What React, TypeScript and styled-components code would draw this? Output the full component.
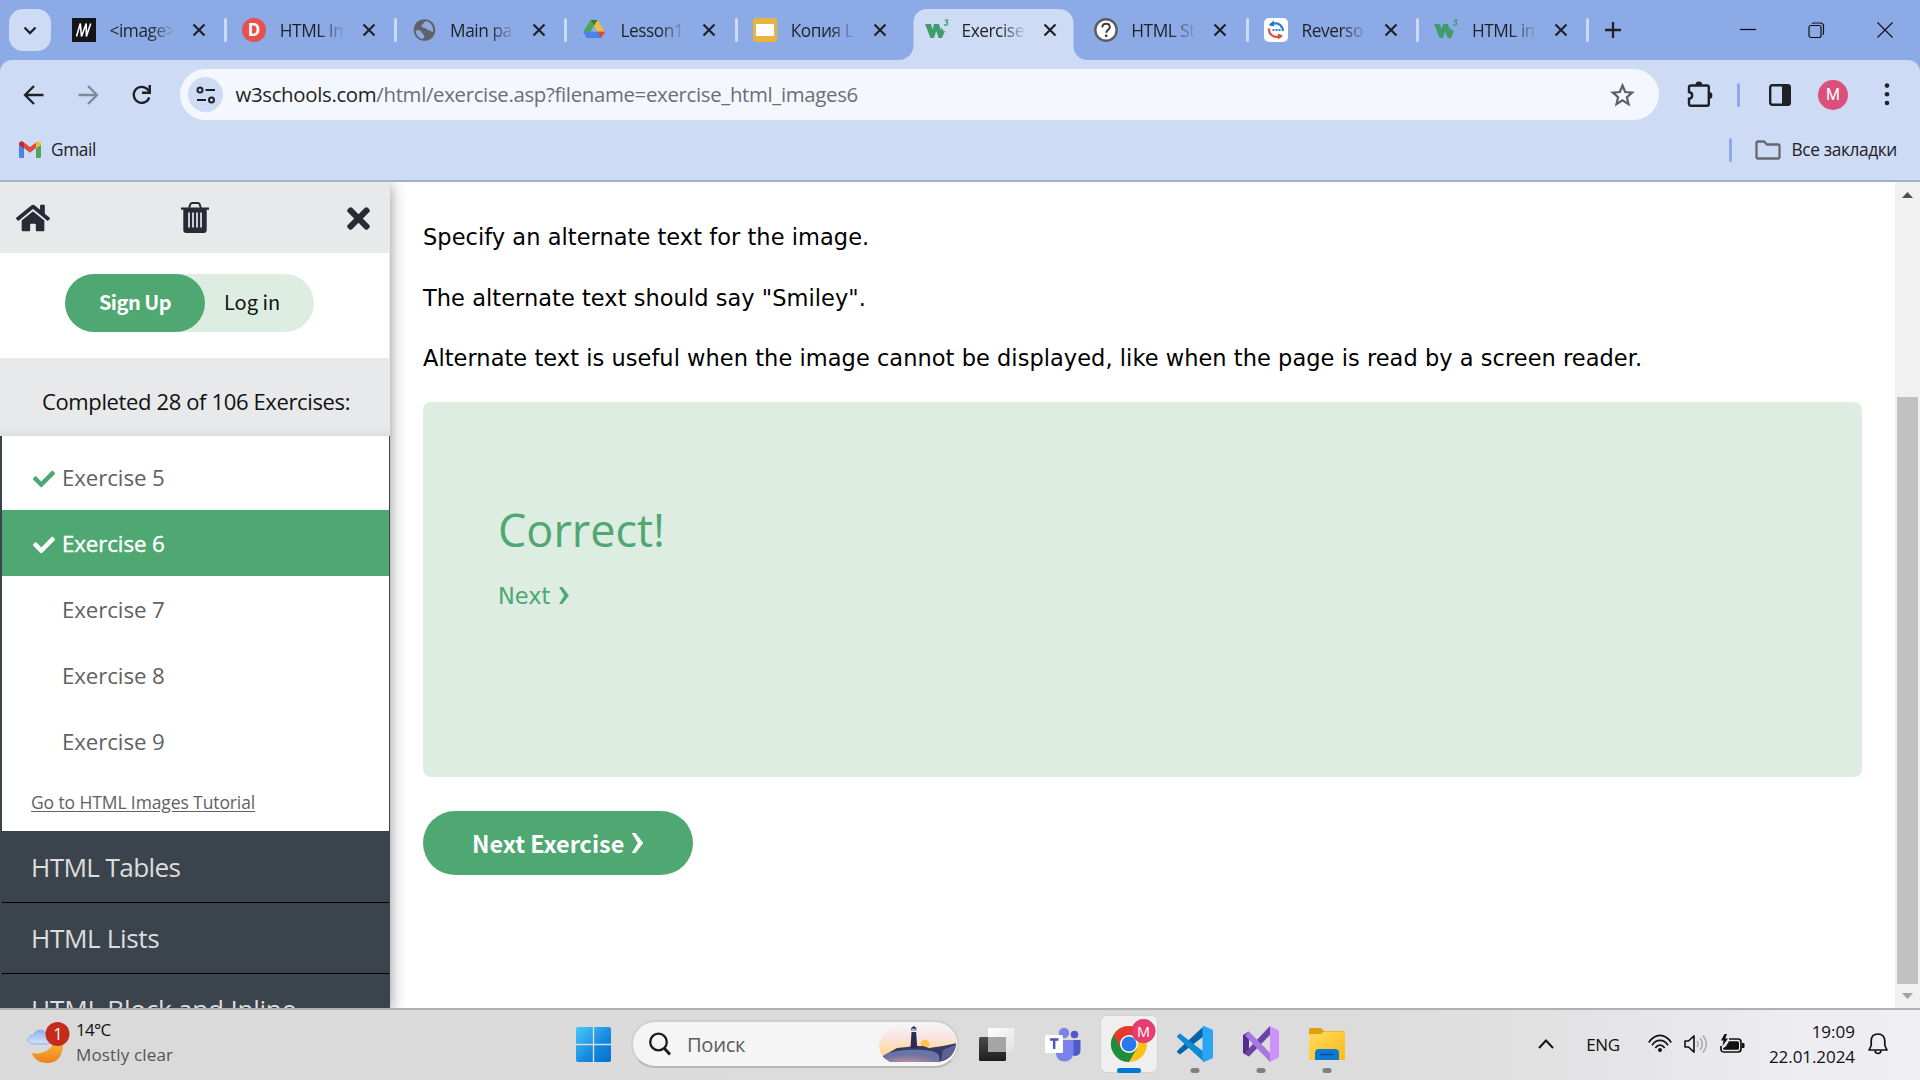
import React from "react";
import styled, { createGlobalStyle } from "styled-components";
import { FaCheck, FaHome, FaTimes } from "react-icons/fa";

const UI = `"Open Sans", "Noto Sans", sans-serif`;
const VERDANA = `Verdana, "DejaVu Sans", sans-serif`;
const SOURCE = `"Noto Sans CJK SC", sans-serif`;

const Global = createGlobalStyle`
  * { box-sizing: border-box; }
  body { margin: 0; background: #fff; overflow: hidden; }
  svg { display: block; flex: none; }
`;

const Screen = styled.div`
  width: 1920px;
  height: 1080px;
  display: flex;
  flex-direction: column;
  overflow: hidden;
  font-family: ${UI};
  color: #1f2125;
`;

/* Browser tabs */
const TabStrip = styled.div`
  height: 60px;
  flex: none;
  display: flex;
  align-items: center;
  background: #8cabe6;
`;
const TabSearch = styled.div`
  width: 42px;
  height: 42px;
  margin: 0 3px 0 9px;
  border-radius: 14px;
  background: #cedbf5;
  display: grid;
  place-items: center;
  flex: none;
`;
const TabItem = styled.div<{ $active?: boolean }>`
  position: relative;
  width: 170.3px;
  height: 60px;
  padding-left: ${(p) => (p.$active ? 20 : 18)}px;
  display: flex;
  align-items: center;
  flex: none;
`;
const ActiveShape = styled.svg`
  position: absolute;
  left: -7px;
  top: 9px;
`;
const TabIcon = styled.span`
  position: relative;
`;
const TabTitle = styled.div<{ $active?: boolean }>`
  position: relative;
  width: 63px;
  margin-left: ${(p) => (p.$active ? 12 : 13.5)}px;
  padding-top: 2px;
  overflow: hidden;
  white-space: nowrap;
  font-size: 17.3px;
  line-height: 24px;
  letter-spacing: -0.45px;
  mask-image: linear-gradient(90deg, #000 62%, transparent 104%);
`;
const TabClose = styled.svg`
  position: relative;
  margin-left: 19px;
`;
const TabDivider = styled.i`
  width: 3px;
  height: 24px;
  margin-left: auto;
  margin-right: -2.5px;
  border-radius: 2px;
  background: #cedbf5;
`;
const NewTab = styled.svg`
  margin-left: 18px;
`;
const WindowButtons = styled.div`
  margin-left: auto;
  margin-right: 27px;
  display: flex;
  align-items: center;
  gap: 52px;
`;

/* Toolbar */
const ChromeBody = styled.div`
  height: 122px;
  flex: none;
  background: #8cabe6;
`;
const ChromePanel = styled.div`
  height: 122px;
  border-radius: 12px 12px 0 0;
  background: #cedbf5;
  border-bottom: 2px solid #a4b0cb;
`;
const Toolbar = styled.div`
  height: 69px;
  display: flex;
  align-items: center;
`;
const NavIcons = styled.div`
  width: 180px;
  padding-left: 23px;
  display: flex;
  gap: 32px;
`;
const Omnibox = styled.div`
  width: 1479px;
  height: 51px;
  padding: 0 24px 0 8px;
  border-radius: 26px;
  background: #f4f8fe;
  display: flex;
  align-items: center;
`;
const SiteChip = styled.div`
  width: 35px;
  height: 35px;
  border-radius: 50%;
  background: #cedbf5;
  display: grid;
  place-items: center;
`;
const Url = styled.div`
  flex: 1;
  margin-left: 12.5px;
  padding-bottom: 2px;
  font-size: 20.4px;
  letter-spacing: -0.33px;
  line-height: 30px;
  color: #6b6e73;
  white-space: nowrap;
`;
const Host = styled.span`
  color: #1f2125;
`;
const ToolbarActions = styled.div`
  flex: 1;
  padding-left: 28px;
  display: flex;
  align-items: center;
`;
const BlueDivider = styled.i<{ $left: number; $right: number }>`
  width: 3px;
  height: 24px;
  margin: 0 ${(p) => p.$right}px 0 ${(p) => p.$left}px;
  border-radius: 2px;
  background: #8cabe6;
`;
const Avatar = styled.div`
  width: 30px;
  height: 30px;
  margin: 0 36px 0 27px;
  border-radius: 50%;
  background: #dc4f7a;
  color: #fff;
  display: grid;
  place-items: center;
  font: 400 16px Roboto, sans-serif;
`;
const Bookmarks = styled.div`
  height: 41px;
  padding: 0 23px 0 19px;
  display: flex;
  align-items: center;
  font-size: 17.3px;
  letter-spacing: -0.36px;
  line-height: 24px;
`;
const BookmarkText = styled.span`
  margin-left: 10px;
  white-space: nowrap;
`;
const BookmarksEnd = styled.div`
  margin-left: auto;
  display: flex;
  align-items: center;
`;

/* Page */
const Viewport = styled.div`
  height: 826px;
  flex: none;
  display: flex;
  background: #fff;
  overflow: hidden;
`;
const Sidebar = styled.aside`
  width: 390px;
  flex: none;
  display: flex;
  flex-direction: column;
  background: #3b444c;
  box-shadow: 0 3px 15px rgba(0, 0, 0, 0.45);
`;
const SideIcons = styled.div`
  height: 71px;
  flex: none;
  padding: 0 15px 0 16px;
  display: flex;
  align-items: center;
  justify-content: space-between;
  background: #e7e9eb;
  color: #282a35;
`;
const TrashSlot = styled.span`
  margin-right: 3px;
`;
const CloseSlot = styled.span`
  padding-top: 2px;
  stroke: #282a35;
  stroke-width: 18px;
`;
const AccountRow = styled.div`
  height: 105px;
  flex: none;
  padding: 21px 0 0 65px;
  background: #fff;
  border-right: 1px solid #e2e4e6;
`;
const AccountPill = styled.div`
  width: 249px;
  height: 58px;
  display: flex;
  border-radius: 29px;
  background: #ddede1;
  font-family: ${SOURCE};
  font-size: 20px;
  line-height: 56px;
  color: #111;
`;
const SignUp = styled.div`
  width: 140px;
  height: 58px;
  margin-right: 19px;
  border-radius: 29px;
  background: #4fa772;
  color: #fff;
  font-weight: 600;
  letter-spacing: -0.5px;
  text-align: center;
`;
const Progress = styled.div`
  height: 78px;
  flex: none;
  padding: 7px 0 0 42px;
  display: flex;
  align-items: center;
  background: linear-gradient(#e7e9eb 90%, #dcdee0);
  font-size: 22px;
  letter-spacing: -0.37px;
  color: #111;
  white-space: nowrap;
`;
const ExerciseList = styled.div`
  height: 395px;
  flex: none;
  margin: 0 1px 0 2px;
  padding-top: 8px;
  background: #fff;
`;
const ExerciseRow = styled.div<{ $current?: boolean }>`
  height: 66px;
  padding: 1px 0 0 31px;
  display: flex;
  align-items: center;
  font-size: 22.3px;
  letter-spacing: -0.1px;
  color: ${(p) => (p.$current ? "#fff" : "#616161")};
  background: ${(p) => (p.$current ? "#4fa772" : "transparent")};
  ${(p) => p.$current && `-webkit-text-stroke: 0.4px #fff;`}
`;
const Mark = styled.span<{ $current?: boolean }>`
  width: 29px;
  padding-top: 2px;
  font-size: 22px;
  color: ${(p) => (p.$current ? "#fff" : "#4fa772")};
  stroke: currentColor;
  stroke-width: 20px;
`;
const TutorialLink = styled.a`
  display: block;
  padding-left: 29px;
  line-height: 57px;
  font-size: 17.5px;
  letter-spacing: -0.11px;
  color: #616161;
  text-decoration: underline;
  text-underline-offset: 2px;
`;
const Section = styled.div<{ $h: number; $track: number }>`
  height: ${(p) => p.$h}px;
  flex: none;
  margin: 0 1px 0 2px;
  padding-left: 29px;
  display: flex;
  align-items: center;
  border-bottom: 1px solid #000;
  font-size: 26.2px;
  letter-spacing: ${(p) => p.$track}px;
  color: #ddd;
  white-space: nowrap;
`;
const Main = styled.main`
  flex: 1;
  padding: 38px 33px 0 33px;
`;
const Paragraph = styled.p`
  margin: 0 0 26.5px;
  font-family: ${VERDANA};
  font-size: 22.5px;
  line-height: 34px;
  letter-spacing: 0.04px;
  color: #000;
  white-space: nowrap;
`;
const Result = styled.section`
  height: 375px;
  padding: 95px 75px 0;
  border-radius: 8px;
  background: #ddede1;
  color: #4fa772;
`;
const ResultTitle = styled.h2`
  margin: 0 0 16px;
  font-weight: 400;
  font-size: 45px;
  line-height: 66px;
`;
const ResultNext = styled.div`
  display: flex;
  align-items: center;
  gap: 9px;
  font-family: ${VERDANA};
  font-size: 22.5px;
  line-height: 34px;
`;
const NextButton = styled.div`
  width: 270px;
  height: 64px;
  margin-top: 34px;
  padding-left: 49px;
  display: flex;
  align-items: center;
  gap: 7px;
  border-radius: 32px;
  background: #4fa772;
  color: #fff;
  font-family: ${SOURCE};
  font-weight: 600;
  font-size: 23.4px;
  line-height: 34px;
`;
const ScrollTrack = styled.div`
  width: 25px;
  flex: none;
  padding: 10px 2px 9px;
  display: flex;
  flex-direction: column;
  align-items: center;
  background: #f1f1f1;
`;
const ScrollThumb = styled.div`
  width: 21px;
  height: 587px;
  margin: auto 0 9px;
  background: #c1c1c1;
`;

/* Taskbar */
const Taskbar = styled.div`
  height: 72px;
  flex: none;
  padding-bottom: 2px;
  display: flex;
  align-items: center;
  border-top: 2px solid #b0b0b0;
  background: linear-gradient(90deg, #dadada 0, #dcdcdc 70%, #e1e1e2 80%, #ececf1 93%, #eeeef3 100%);
`;
const Weather = styled.div`
  position: relative;
  width: 576px;
  padding: 0 0 3px 27px;
  display: flex;
  align-items: center;
  gap: 6px;
`;
const Stack = styled.div<{ $end?: boolean }>`
  padding-bottom: 1px;
  font-size: 17px;
  line-height: 25px;
  text-align: ${(p) => (p.$end ? "right" : "left")};
  white-space: nowrap;
`;
const Line = styled.div<{ $muted?: boolean; $track?: number }>`
  letter-spacing: ${(p) => p.$track ?? 0}px;
  color: ${(p) => (p.$muted ? "#555" : "#111")};
`;
const SearchBox = styled.div`
  width: 328px;
  height: 48px;
  margin: -1px 5px 0 20px;
  padding-left: 16px;
  display: flex;
  align-items: center;
  border: 2px solid #cfcfcf;
  border-bottom-color: #b8b8b8;
  border-radius: 24px;
  background: #f5f5f5;
  font-size: 20.2px;
  letter-spacing: -0.35px;
  color: #5c5c5c;
`;
const SearchText = styled.span`
  flex: 1;
  margin-left: 16px;
`;
const Slot = styled.div<{ $active?: boolean }>`
  position: relative;
  width: 58px;
  height: 58px;
  margin: 0 4px;
  padding-bottom: 1px;
  display: grid;
  place-items: center;
  border-radius: 7px;
  border: 1px solid ${(p) => (p.$active ? "#d2d2d2" : "transparent")};
  background: ${(p) => (p.$active ? "#efefef" : "transparent")};
`;
const Indicator = styled.i<{ $active?: boolean }>`
  position: absolute;
  bottom: -1px;
  left: 50%;
  width: ${(p) => (p.$active ? 24 : 9)}px;
  height: 5px;
  transform: translateX(-50%);
  border-radius: 3px;
  background: ${(p) => (p.$active ? "#0078d4" : "#808080")};
`;
const Tray = styled.div`
  margin-left: auto;
  padding-right: 32px;
  display: flex;
  align-items: center;
`;
const Lang = styled.span`
  margin: 0 28px 0 32px;
  font-size: 17px;
  letter-spacing: -0.3px;
  color: #111;
`;
const TrayIcons = styled.div`
  margin-right: 24px;
  display: flex;
  align-items: center;
  gap: 12px;
`;
const BellWrap = styled.div`
  margin-left: 13px;
`;

const W3Icon = () => (
  <svg width="24" height="24" viewBox="0 0 24 24">
    <path d="M0 6h6l1.600 5.500L9 6h5l1.800 6 1-2.500 1.600 3.500H20L17 20h-3.500L11.300 13 9 20H5.500z" fill="#3f9c6b" />
    <path d="M19.500 2h3.300l-1.500 2.100c2 .3 1.800 3.200-.4 3.200-.9 0-1.500-.4-1.700-1.100" fill="none" stroke="#3f9c6b" strokeWidth="1.200" />
  </svg>
);
const favicons: Record<string, React.ReactNode> = {
  m: (
    <svg width="24" height="24" viewBox="0 0 24 24">
      <path d="M0 0h24v24H0z" fill="#15141a" />
      <path d="M4.500 18.500 8.300 5.500 9.500 18.500 14.200 5.500 14.400 18.500 18.700 5.500" fill="none" stroke="#fff" strokeWidth="1.600" />
    </svg>
  ),
  d: (
    <svg width="24" height="24" viewBox="0 0 24 24">
      <circle cx="12" cy="12" r="12" fill="#e8504a" />
      <text x="12" y="18" fill="#fff" fontFamily="Open Sans, sans-serif" fontWeight="700" fontSize="17" textAnchor="middle">D</text>
    </svg>
  ),
  globe: (
    <svg width="24" height="24" viewBox="0 0 24 24">
      <circle cx="11.500" cy="12" r="10.800" fill="#5f6368" />
      <path d="M2.800 12.500c3.800-1 6 .4 6.200 2.400.1 1.500 2.600 1 2.200 3.400l-1 2.800C6 20.500 2.800 17 2.800 12.500zM13.500 3c-1.500 1-3 1-3 2.500s-2.600.6-2 2.500 4 1.500 5 3 3.500 1 4.500 2 1 1.300 2 .3C20.500 8.500 18 4.500 13.500 3z" fill="#8cabe6" />
    </svg>
  ),
  drive: (
    <svg width="24" height="24" viewBox="0 0 24 24">
      <path d="M7.500 2h7L7.300 13.800 4 20 .3 13.800z" fill="#4ba55a" />
      <path d="M7.500 2h7l7.500 12h-7.300z" fill="#f4bb41" />
      <path d="M7.500 2h7L11 7.800z" fill="#327e3c" />
      <path d="M.3 13.800h21.700L18 20H4z" fill="#4a83ee" />
      <path d="M14.700 13.800H22L18 20z" fill="#d9493a" />
    </svg>
  ),
  slides: (
    <svg width="24" height="24" viewBox="0 0 24 24">
      <rect width="24" height="24" rx="3" fill="#e9b43d" />
      <path d="M3 6h18v12H3z" fill="#fff" />
    </svg>
  ),
  w3: <W3Icon />,
  help: (
    <svg width="24" height="24" viewBox="0 0 24 24">
      <circle cx="12" cy="12" r="10.700" fill="#fff" stroke="#5d5d5d" strokeWidth="2.400" />
      <path d="M8.300 9.500C8.300 7 9.800 5.800 12 5.800s3.800 1.300 3.800 3.400c0 2.500-3.500 2.700-3.500 5.600" fill="none" stroke="#3c3c3c" strokeWidth="2" />
      <circle cx="12.200" cy="17.800" r="1.400" fill="#3c3c3c" />
    </svg>
  ),
  reverso: (
    <svg width="24" height="24" viewBox="0 0 24 24">
      <rect width="24" height="24" rx="5" fill="#fff" />
      <path d="M6 7.500c4-3.800 10-2.500 12.300 2.500.5 1.300.6 2 .6 3" fill="none" stroke="#2f7fd6" strokeWidth="2.200" />
      <path d="M10 2.500 5 6.500l5 2z" fill="#2f6fc6" />
      <path d="M5 10.500c-.5 5 3 8.500 8 8.300 1.800 0 3.300-.6 4.500-1.500" fill="none" stroke="#d9523f" strokeWidth="2.200" />
      <path d="M14 21.500 19 18l-5-2.500z" fill="#d9523f" />
      <path d="M8.500 12h2m1 0h2m1 0h2" stroke="#2f7fd6" strokeWidth="2" />
    </svg>
  ),
};

const tabs = [
  { icon: "m", title: "<image>", divider: true },
  { icon: "d", title: "HTML Images", divider: true },
  { icon: "globe", title: "Main page", divider: true },
  { icon: "drive", title: "Lesson10", divider: true },
  { icon: "slides", title: "Копия Lesson" },
  { icon: "w3", title: "Exercise v", active: true },
  { icon: "help", title: "HTML Style", divider: true },
  { icon: "reverso", title: "Reverso", divider: true },
  { icon: "w3", title: "HTML images", divider: true },
];

const Tab = ({ icon, title, active, divider }: { icon: string; title: string; active?: boolean; divider?: boolean }) => (
  <TabItem $active={active}>
    {active && (
      <ActiveShape width="190" height="51" viewBox="0 0 190 51">
        <path d="M0 51c10 0 15.500-7 15.500-15V14C15.500 5 21.500 0 29.500 0h130c10 0 16 6 16 14v22c0 9 6 15 14.500 15z" fill="#cedbf5" />
      </ActiveShape>
    )}
    <TabIcon>{favicons[icon]}</TabIcon>
    <TabTitle $active={active}>{title}</TabTitle>
    <TabClose width="14" height="14" viewBox="0 0 14 14">
      <path d="M1.500 1.500l11 11M12.500 1.500l-11 11" stroke="#1f2125" strokeWidth="2.200" />
    </TabClose>
    {divider && <TabDivider />}
  </TabItem>
);

const BackArrow = ({ color, flip }: { color: string; flip?: boolean }) => (
  <svg width="22" height="22" viewBox="0 0 22 22">
    <path d={flip ? "M1.500 11h17M11 2l9 9-9 9" : "M20.500 11h-17M11 2l-9 9 9 9"} fill="none" stroke={color} strokeWidth="2.300" />
  </svg>
);

const Gmail = () => (
  <svg width="22" height="17" viewBox="0 0 22 17">
    <path d="M0 3l5 3.800V17H1.500A1.500 1.500 0 0 1 0 15.500z" fill="#4a83ee" />
    <path d="M22 3l-5 3.800V17h3.500a1.500 1.500 0 0 0 1.500-1.500z" fill="#4ba55a" />
    <path d="M5 1.500l6 4.600 6-4.600v5.600l-6 4.600-6-4.600z" fill="#dc4b3e" />
    <path d="M17 1.500C19-.5 22 .3 22 2.800V4l-5 3.500z" fill="#f4bb41" />
    <path d="M5 1.500C3-.5 0 .3 0 2.800V4l5 3.500z" fill="#b53128" />
  </svg>
);

const Trash = () => (
  <svg width="28" height="31" viewBox="0 0 28 31">
    <path d="M8 6l1.500-4Q10 1 11 1h6q1 0 1.500 1L20 6" fill="none" stroke="#282a35" strokeWidth="2" />
    <path d="M0 5.500h28v2.200h-2.300V28q0 3-3 3H5.300q-3 0-3-3V7.700H0z" fill="#282a35" />
    <path d="M8 10.500v15M12 10.500v15M16 10.500v15M20 10.500v15" stroke="#e7e9eb" strokeWidth="1.700" />
  </svg>
);

const Chevron = ({ w, h, color }: { w: number; h: number; color: string }) => (
  <svg width={w} height={h} viewBox="0 0 11 19">
    <path d="M0 0h3.600L11 9.500 3.600 19H0l5.800-9.500z" fill={color} />
  </svg>
);

const WeatherIcon = () => (
  <svg width="43" height="42" viewBox="0 0 43 42">
    <defs>
      <linearGradient id="moon" x1="0" y1="0" x2="0" y2="1">
        <stop offset="0" stopColor="#f6b93a" />
        <stop offset="1" stopColor="#ef7f1a" />
      </linearGradient>
      <linearGradient id="cloud" x1="0" y1="0" x2="0" y2="1">
        <stop offset="0" stopColor="#8eb2f0" />
        <stop offset="1" stopColor="#d3e2f8" />
      </linearGradient>
    </defs>
    <path d="M5 31c10 2 20-3 21-11l9.500 0c1.500 9-2 21-15 21-8 0-14-4-15.500-10z" fill="url(#moon)" />
    <path d="M6 22c-7 0-7-9 1-9 1-6 11-7 13 0 7 0 7 9 0 9z" fill="url(#cloud)" stroke="#7fa4ea" strokeWidth=".8" />
    <circle cx="30.500" cy="12" r="12" fill="#c42b1c" />
    <text x="31" y="18" fill="#fff" fontFamily="Open Sans, sans-serif" fontSize="16.500" textAnchor="middle">1</text>
  </svg>
);

const WindowsLogo = () => (
  <svg width="35" height="35" viewBox="0 0 35 35">
    <defs>
      <linearGradient id="win" x1="0" y1="0" x2="1" y2="1">
        <stop offset="0" stopColor="#4cc9fb" />
        <stop offset=".6" stopColor="#1488df" />
        <stop offset="1" stopColor="#0470cf" />
      </linearGradient>
    </defs>
    <path d="M2 0h14.800v16.800H0V2q0-2 2-2zM18.200 0H33q2 0 2 2v14.800H18.200zM0 18.200h16.800V35H2q-2 0-2-2zM18.200 18.200H35V33q0 2-2 2H18.200z" fill="url(#win)" />
  </svg>
);

const Lighthouse = () => (
  <svg width="78" height="38" viewBox="0 0 78 38">
    <defs>
      <linearGradient id="sky" x1="0" y1="0" x2="0" y2="1">
        <stop offset="0" stopColor="#f5f5f5" />
        <stop offset=".3" stopColor="#f9e4e3" />
        <stop offset=".7" stopColor="#fddba0" />
      </linearGradient>
      <radialGradient id="sea" cx=".45" cy="1" r=".6">
        <stop offset="0" stopColor="#c98f95" />
        <stop offset="1" stopColor="#6a75a5" />
      </radialGradient>
      <clipPath id="scene">
        <path d="M0 20C2 8 12 0 30 0h28c12 0 19 8 19 17 0 11-8 20-20 20H12C5 34 0 29 0 20z" />
      </clipPath>
    </defs>
    <g clipPath="url(#scene)">
      <path d="M0 0h78v38H0z" fill="url(#sky)" />
      <circle cx="46" cy="19" r="4.300" fill="#fdc24e" />
      <path d="M4 31l14-8 10-1 6-1h10l6 2 14-2 14-3v20H4z" fill="#353b66" />
      <path d="M5 30c10-5 25-6 40-5 14 1 17 5 15 13H6z" fill="url(#sea)" />
      <path d="M64 25l14-6v9L62 36z" fill="#5a6296" />
      <path d="M32.500 7h4.600l1.200 16h-6.800z" fill="#2a2c54" />
      <path d="M32.300 5.500h5v-2.500l-2.500-2-2.500 2z" fill="#352b50" />
      <path d="M33 4.500h3.600" stroke="#9fe0d8" strokeWidth="1.500" />
    </g>
  </svg>
);

const TaskView = () => (
  <svg width="36" height="36" viewBox="0 0 36 36">
    <defs>
      <linearGradient id="tv1" x1="0" y1="0" x2="0" y2="1">
        <stop offset="0" stopColor="#4b4b4b" />
        <stop offset="1" stopColor="#1d1d1d" />
      </linearGradient>
      <linearGradient id="tv2" x1="0" y1="0" x2="1" y2="1">
        <stop offset="0" stopColor="#fff" />
        <stop offset="1" stopColor="#e0e0e0" />
      </linearGradient>
    </defs>
    <rect x="0" y="11" width="27" height="24" rx="1.500" fill="url(#tv1)" />
    <rect x="9" y="2" width="26.500" height="24" rx="1" fill="url(#tv2)" />
    <path d="M9 11h18v15H9z" fill="#a5a5a5" />
  </svg>
);

const Teams = () => (
  <svg width="36" height="36" viewBox="0 0 36 36">
    <circle cx="29.500" cy="8.500" r="3.800" fill="#5059c9" />
    <path d="M26 14h9.500v10c0 7-7 7-9.500 4z" fill="#5059c9" />
    <circle cx="19" cy="7" r="5.200" fill="#7b83eb" />
    <path d="M11 14h17.500v12c0 6-4 9.500-9 9.500S11 32 11 27z" fill="#7b83eb" />
    <rect x="0" y="9" width="18" height="18" rx="1.500" fill="#fff" />
    <path d="M5 13.500h8.500M9.200 13.500V23" stroke="#4b53bc" strokeWidth="2.400" />
  </svg>
);

const ChromeLogo = () => (
  <svg width="54" height="50" viewBox="-8 0 54 50">
    <circle cx="19" cy="25" r="18" fill="#fbc116" />
    <path d="M19 25 3.400 16A18 18 0 0 0 19 43l7.800-13.500z" fill="#1e8e3e" />
    <path d="M19 16h15.600A18 18 0 0 0 3.400 16l7.800 13.500z" fill="#e33b2e" />
    <circle cx="19" cy="25" r="9" fill="#fff" />
    <circle cx="19" cy="25" r="7.500" fill="#2a78ec" />
    <circle cx="33.500" cy="12" r="11.700" fill="#e93d72" stroke="#b8345d" strokeWidth=".6" />
    <text x="33.500" y="17.500" fill="#fff" fontFamily="Open Sans, sans-serif" fontSize="14.500" textAnchor="middle">M</text>
  </svg>
);

const VSCode = () => (
  <svg width="36" height="36" viewBox="0 0 36 36">
    <path d="M27 0 1 24q-2 2 0 3l2 1.500L27 10z" fill="#0065a9" />
    <path d="M27 36 1 12q-2-2 0-3l2-1.500L27 26z" fill="#1289d3" />
    <path d="M27 0l8 3.500q1 .5 1 1.500v26q0 1-1 1.500L27 36q-1.500 0-1.500-3V3Q25.500 0 27 0z" fill="#2aa5f3" />
  </svg>
);

const VisualStudio = () => (
  <svg width="36" height="36" viewBox="0 0 36 36">
    <path d="M0 9l6-3.500v25L0 27z" fill="#52308a" />
    <path d="M6 30.500 27 9V0L2 26.500z" fill="#6c44a8" />
    <path d="M6 5.500 27 27v9L2 9.500z" fill="#a878e0" />
    <path d="M27 0l9 4.500v27L27 36z" fill="#cd93fb" />
  </svg>
);

const Folder = () => (
  <svg width="36" height="36" viewBox="0 0 36 36">
    <defs>
      <linearGradient id="fold" x1="0" y1="0" x2="1" y2="1">
        <stop offset="0" stopColor="#ffdc62" />
        <stop offset="1" stopColor="#fbba12" />
      </linearGradient>
    </defs>
    <path d="M0 4q0-2 2-2h10l3 3h19q2 0 2 2v8H0z" fill="#e09f0c" />
    <path d="M0 8h12l3-2.500h21V34H0z" fill="url(#fold)" />
    <path d="M6 34v-7q0-4 4-4h16q4 0 4 4v7z" fill="#0f78d0" />
    <path d="M11 28.500h14" stroke="#0a4f97" strokeWidth="1.500" />
  </svg>
);

const apps = [
  { icon: <TaskView /> },
  { icon: <Teams /> },
  { icon: <ChromeLogo />, active: true, running: true },
  { icon: <VSCode />, running: true },
  { icon: <VisualStudio />, running: true },
  { icon: <Folder />, running: true },
];

const exercises = [
  { name: "Exercise 5", done: true },
  { name: "Exercise 6", done: true, current: true },
  { name: "Exercise 7" },
  { name: "Exercise 8" },
  { name: "Exercise 9" },
];

export default function App() {
  return (
    <Screen>
      <Global />
      <TabStrip>
        <TabSearch>
          <svg width="14" height="9" viewBox="0 0 14 9">
            <path d="M1.500 1.500 7 7l5.500-5.500" fill="none" stroke="#1f2125" strokeWidth="2.300" />
          </svg>
        </TabSearch>
        {tabs.map((t, i) => (
          <Tab key={i} {...t} />
        ))}
        <NewTab width="16" height="16" viewBox="0 0 16 16">
          <path d="M8 0v16M0 8h16" stroke="#1f2125" strokeWidth="2.300" />
        </NewTab>
        <WindowButtons>
          <svg width="16" height="16" viewBox="0 0 16 16">
            <path d="M0 7.500h16" stroke="#111" strokeWidth="1.300" />
          </svg>
          <svg width="17" height="17" viewBox="0 0 17 17">
            <rect x="1" y="3.500" width="12" height="12" rx="2" fill="none" stroke="#111" strokeWidth="1.200" />
            <path d="M4 1.500Q5 1 6 1h6q3.500 0 3.500 3.500v6q0 1.500-.8 2.200" fill="none" stroke="#111" strokeWidth="1.200" />
          </svg>
          <svg width="16" height="16" viewBox="0 0 16 16">
            <path d="M.5.500l15 15M15.500.500l-15 15" stroke="#111" strokeWidth="1.200" />
          </svg>
        </WindowButtons>
      </TabStrip>

      <ChromeBody>
        <ChromePanel>
          <Toolbar>
            <NavIcons>
              <BackArrow color="#1f2125" />
              <BackArrow color="#7f899c" flip />
              <svg width="22" height="22" viewBox="0 0 22 22">
                <path d="M18.300 13.500A8 8 0 1 1 17 5.800L19 8" fill="none" stroke="#1f2125" strokeWidth="2.300" />
                <path d="M20 1v9h-9V7.500h6.500V1z" fill="#1f2125" />
              </svg>
            </NavIcons>
            <Omnibox>
              <SiteChip>
                <svg width="20" height="18" viewBox="0 0 20 18">
                  <g fill="none" stroke="#1f2125" strokeWidth="2">
                    <circle cx="4" cy="4" r="2.500" />
                    <path d="M9.500 4H19M1 14h9" />
                    <circle cx="15.500" cy="14" r="2.500" />
                  </g>
                </svg>
              </SiteChip>
              <Url>
                <Host>w3schools.com</Host>/html/exercise.asp?filename=exercise_html_images6
              </Url>
              <svg width="25" height="24" viewBox="0 0 25 24">
                <path d="M12.500 2.500l2.700 6.500 7 .6-5.300 4.600 1.600 6.900-6-3.700-6 3.700 1.600-6.900-5.300-4.600 7-.6z" fill="none" stroke="#5c5f64" strokeWidth="2.200" />
              </svg>
            </Omnibox>
            <ToolbarActions>
              <svg width="26" height="28" viewBox="0 0 26 28">
                <path d="M4 4.500h16q1.800 0 1.800 1.800V23q0 1.800-1.800 1.800H4Q2 24.800 2 23v-5.200c4.200-.8 4.200-6 0-6.800V6.300Q2 4.500 4 4.500z" fill="none" stroke="#1f2125" strokeWidth="2.400" />
                <path d="M8.500 4a3.400 3.400 0 0 1 6.800 0zM22 11a3.400 3.400 0 0 1 0 6.800z" fill="#1f2125" />
              </svg>
              <BlueDivider $left={24} $right={29} />
              <svg width="22" height="22" viewBox="0 0 22 22">
                <rect x="1.200" y="1.200" width="19.600" height="19.600" rx="2" fill="none" stroke="#1f2125" strokeWidth="2.400" />
                <path d="M13 1h8v20h-8z" fill="#1f2125" />
              </svg>
              <Avatar>M</Avatar>
              <svg width="6" height="24" viewBox="0 0 6 24">
                <g fill="#1f2125">
                  <circle cx="3" cy="2.600" r="2.300" />
                  <circle cx="3" cy="11.300" r="2.300" />
                  <circle cx="3" cy="20" r="2.300" />
                </g>
              </svg>
            </ToolbarActions>
          </Toolbar>
          <Bookmarks>
            <Gmail />
            <BookmarkText>Gmail</BookmarkText>
            <BookmarksEnd>
              <BlueDivider $left={0} $right={23} />
              <svg width="26" height="20" viewBox="0 0 26 20">
                <path d="M3 1.500h6l3 3h11q1.500 0 1.500 1.500v11q0 1.500-1.500 1.500H3q-1.500 0-1.500-1.500V3Q1.500 1.500 3 1.500z" fill="none" stroke="#66696e" strokeWidth="2.300" />
              </svg>
              <BookmarkText>Все закладки</BookmarkText>
            </BookmarksEnd>
          </Bookmarks>
        </ChromePanel>
      </ChromeBody>

      <Viewport>
        <Sidebar>
          <SideIcons>
            <FaHome size={34} />
            <TrashSlot>
              <Trash />
            </TrashSlot>
            <CloseSlot>
              <FaTimes size={33} />
            </CloseSlot>
          </SideIcons>
          <AccountRow>
            <AccountPill>
              <SignUp>Sign Up</SignUp>
              Log in
            </AccountPill>
          </AccountRow>
          <Progress>Completed 28 of 106 Exercises:</Progress>
          <ExerciseList>
            {exercises.map((e) => (
              <ExerciseRow key={e.name} $current={e.current}>
                <Mark $current={e.current}>{e.done && <FaCheck />}</Mark>
                {e.name}
              </ExerciseRow>
            ))}
            <TutorialLink>Go to HTML Images Tutorial</TutorialLink>
          </ExerciseList>
          <Section $h={72} $track={-0.65}>HTML Tables</Section>
          <Section $h={71} $track={-0.4}>HTML Lists</Section>
          <Section $h={71} $track={-0.28}>HTML Block and Inline</Section>
        </Sidebar>
        <Main>
          <Paragraph>Specify an alternate text for the image.</Paragraph>
          <Paragraph>The alternate text should say "Smiley".</Paragraph>
          <Paragraph>
            Alternate text is useful when the image cannot be displayed, like when the page is read by a screen reader.
          </Paragraph>
          <Result>
            <ResultTitle>Correct!</ResultTitle>
            <ResultNext>
              Next <Chevron w={10} h={17} color="#4fa772" />
            </ResultNext>
          </Result>
          <NextButton>
            Next Exercise <Chevron w={13} h={20} color="#fff" />
          </NextButton>
        </Main>
        <ScrollTrack>
          <svg width="11" height="6" viewBox="0 0 11 6">
            <path d="M5.500 0 11 6H0z" fill="#505050" />
          </svg>
          <ScrollThumb />
          <svg width="11" height="6" viewBox="0 0 11 6">
            <path d="M0 0h11L5.500 6z" fill="#a3a3a3" />
          </svg>
        </ScrollTrack>
      </Viewport>

      <Taskbar>
        <Weather>
          <WeatherIcon />
          <Stack>
            <Line $track={-0.7}>14°C</Line>
            <Line $muted $track={0.15}>Mostly clear</Line>
          </Stack>
        </Weather>
        <WindowsLogo />
        <SearchBox>
          <svg width="22" height="24" viewBox="0 0 22 24">
            <circle cx="9.500" cy="10" r="8.300" fill="none" stroke="#1c1c1c" strokeWidth="2.300" />
            <path d="M15.500 16.500l5.500 6" stroke="#1c1c1c" strokeWidth="2.800" />
          </svg>
          <SearchText>Поиск</SearchText>
          <Lighthouse />
        </SearchBox>
        {apps.map((a, i) => (
          <Slot key={i} $active={a.active}>
            {a.icon}
            {a.running && <Indicator $active={a.active} />}
          </Slot>
        ))}
        <Tray>
          <svg width="16" height="10" viewBox="0 0 16 10">
            <path d="M1 9l7-7.500L15 9" fill="none" stroke="#111" strokeWidth="1.900" />
          </svg>
          <Lang>ENG</Lang>
          <TrayIcons>
            <svg width="24" height="20" viewBox="0 0 24 20">
              <g fill="none" stroke="#111" strokeWidth="1.700">
                <path d="M.8 8.500C7-1 17-1 23.200 8.500" />
                <path d="M4 11.300c4.300-6.500 11.700-6.500 16 0" />
                <path d="M7.300 14c2.700-3.800 6.700-3.800 9.400 0" />
              </g>
              <circle cx="12" cy="16" r="2" fill="#111" />
            </svg>
            <svg width="24" height="20" viewBox="0 0 24 20">
              <path d="M1 7h3.500L10 1.800v16.400L4.500 13H1z" fill="none" stroke="#111" strokeWidth="1.600" strokeLinejoin="round" />
              <g fill="none" stroke="#aaa" strokeWidth="1.500">
                <path d="M13 7q2 3 0 6M16 4q4.500 6 0 12M19 1.500q7 8.500 0 17" />
              </g>
            </svg>
            <svg width="25" height="20" viewBox="0 0 25 20">
              <path d="M9 5h9q3 0 3 3v7q0 3-3 3H4q-3 0-3-3v-3" fill="none" stroke="#111" strokeWidth="1.700" />
              <path d="M9 7.300h8.500q1.500 0 1.500 1.500v5.500q0 1.500-1.500 1.500H4.500Q3 15.800 3 14.300l3-2z" fill="#111" />
              <path d="M22 9h1.500q1 0 1 1v3q0 1-1 1H22z" fill="#111" />
              <path d="M4.500 0 1 6.500h2.500L2.500 12 8 4.500H5.200L7 0z" fill="#111" />
            </svg>
          </TrayIcons>
          <Stack $end>
            <Line>19:09</Line>
            <Line $track={-0.06}>22.01.2024</Line>
          </Stack>
          <BellWrap>
            <svg width="20" height="22" viewBox="0 0 20 22">
              <path d="M10 1C5.500 1 3.200 4 3.200 8v4.500L1 17h18l-2.200-4.500V8C16.800 4 14.500 1 10 1z" fill="none" stroke="#111" strokeWidth="1.700" strokeLinejoin="round" />
              <path d="M7 17.500c.3 4 5.700 4 6 0" fill="none" stroke="#111" strokeWidth="1.700" />
            </svg>
          </BellWrap>
        </Tray>
      </Taskbar>
    </Screen>
  );
}
